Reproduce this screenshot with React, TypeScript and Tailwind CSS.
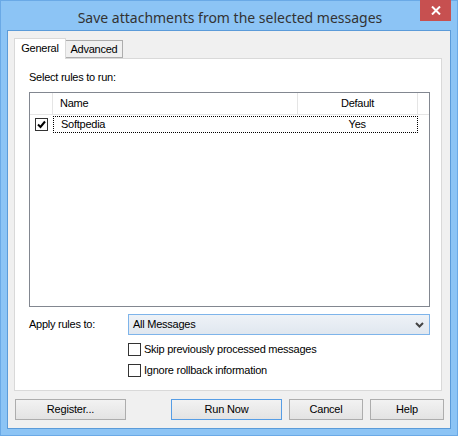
import React from "react";

const ui = { fontFamily: '"Liberation Sans", Arial, sans-serif' };

function Check({ checked }: { checked?: boolean }) {
  return (
    <div className="w-[13px] h-[13px] border border-[#333333] bg-white flex items-center justify-center shrink-0">
      {checked && (
        <svg width="9" height="9" viewBox="0 0 9 9">
          <path d="M1 4.5 L3.5 7 L8 1.5" fill="none" stroke="#000" strokeWidth="2" />
        </svg>
      )}
    </div>
  );
}

function Btn({ label, w, primary }: { label: string; w: string; primary?: boolean }) {
  return (
    <div
      className={`${w} h-[21px] border ${primary ? "border-[#569de5]" : "border-[#adadad]"} bg-gradient-to-b from-[#f2f2f2] to-[#e3e3e3] flex items-center justify-center text-[11px] tracking-[-0.2px] text-black`}
    >
      {label}
    </div>
  );
}

export default function App() {
  return (
    <div className="w-[458px] h-[436px] bg-[#8cc4f5] border border-[#6aa9e6] flex flex-col" style={ui}>
      {/* Title bar */}
      <div className="h-[29px] flex items-start relative">
        <div
          className="flex-1 text-center text-[14px] text-[#333333] pt-[6px] pl-[2px]"
          style={{ fontFamily: '"Noto Sans", "Open Sans", sans-serif' }}
        >
          Save attachments from the selected messages
        </div>
        <div className="absolute right-[6px] -top-px w-[31px] h-[21px] bg-[#c75050] flex items-center justify-center">
          <svg width="10" height="9" viewBox="0 0 10 9">
            <path d="M1 0.5 L9 8.5 M9 0.5 L1 8.5" stroke="#fff" strokeWidth="2" />
          </svg>
        </div>
      </div>

      {/* Client area */}
      <div className="mx-[6px] border border-[#5b9bd9] bg-[#f0f0f0] h-[399px] flex flex-col pl-[6px] pt-[7px] tracking-[-0.25px]">
        {/* Tabs */}
        <div className="flex items-end h-[20px] relative z-10">
          <div className="w-[52px] h-[21px] bg-white border border-[#d9d9d9] border-b-0 flex items-center justify-center text-[11px] text-black -mb-px pb-[2px]">
            General
          </div>
          <div className="w-[57px] h-[18px] bg-[#f0f0f0] border border-[#adadad] border-l-0 flex items-center justify-center text-[11px] text-black">
            Advanced
          </div>
        </div>

        {/* Panel */}
        <div className="w-[428px] h-[333px] bg-white border border-[#d9d9d9] flex flex-col pl-[14px] pt-[12px]">
          <div className="text-[11px] text-black leading-[13px]">Select rules to run:</div>

          {/* List */}
          <div className="mt-[8px] w-[401px] h-[215px] border border-[#828790] bg-white flex flex-col">
            <div className="h-[22px] flex border-b border-[#e5e5e5] bg-white text-[11px] text-black">
              <div className="w-[23px] border-r border-[#e5e5e5]" />
              <div className="w-[245px] border-r border-[#e5e5e5] flex items-center pl-[7px]">Name</div>
              <div className="w-[120px] border-r border-[#e5e5e5] flex items-center justify-center">Default</div>
              <div className="flex-1" />
            </div>
            <div className="h-[18px] flex items-center text-[11px] text-black">
              <div className="w-[23px] flex items-center pl-[5px]">
                <Check checked />
              </div>
              <div className="w-[365px] h-[17px] border border-dotted border-black flex items-center">
                <div className="w-[244px] pl-[7px]">Softpedia</div>
                <div className="w-[120px] text-center">Yes</div>
              </div>
            </div>
          </div>

          {/* Apply rules */}
          <div className="mt-[7px] flex items-center h-[21px]">
            <div className="w-[99px] text-[11px] text-black">Apply rules to:</div>
            <div className="w-[302px] h-[21px] border border-[#7eb4ea] bg-gradient-to-b from-[#eef2f7] to-[#e0e7ef] flex items-center pl-[4px] pr-[5px] text-[11px] text-black">
              <span className="flex-1">All Messages</span>
              <svg width="9" height="6" viewBox="0 0 9 6">
                <path d="M1 1 L4.5 4.5 L8 1" fill="none" stroke="#444" strokeWidth="2" />
              </svg>
            </div>
          </div>

          <div className="mt-[8px] ml-[99px] flex items-center gap-[3px] h-[13px] text-[11px] text-black">
            <Check />
            <span>Skip previously processed messages</span>
          </div>
          <div className="mt-[8px] ml-[99px] flex items-center gap-[3px] h-[13px] text-[11px] text-black">
            <Check />
            <span>Ignore rollback information</span>
          </div>
        </div>

        {/* Buttons */}
        <div className="mt-[8px] flex items-center pl-[1px]">
          <Btn label="Register..." w="w-[111px]" />
          <div className="ml-[45px]">
            <Btn label="Run Now" w="w-[111px]" primary />
          </div>
          <div className="ml-[7px]">
            <Btn label="Cancel" w="w-[74px]" />
          </div>
          <div className="ml-[7px]">
            <Btn label="Help" w="w-[74px]" />
          </div>
        </div>
      </div>
    </div>
  );
}
